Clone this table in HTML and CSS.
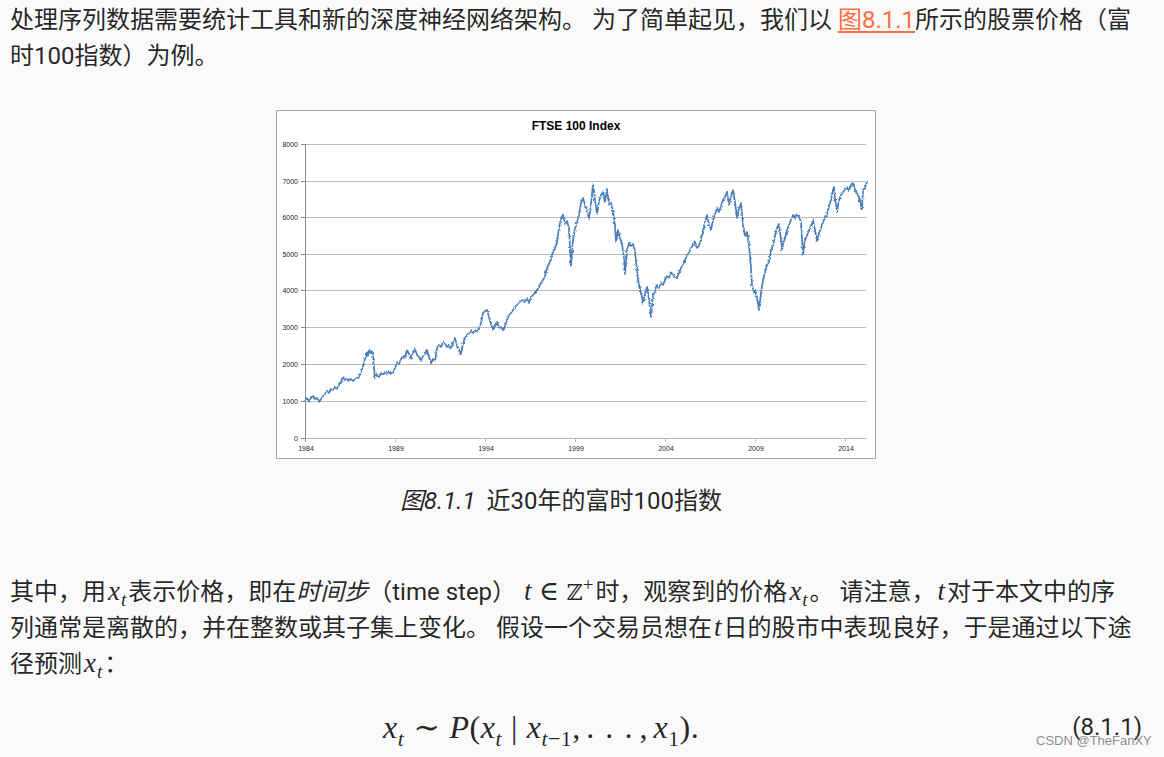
FILE: index.html
```html
<!DOCTYPE html>
<html lang="zh-CN">
<head>
<meta charset="utf-8">
<title>序列模型</title>
<link rel="stylesheet" href="styles.css">
</head>
<body>
<div class="page">
  <p class="para">处理序列数据需要统计工具和新的深度神经网络架构。 为了简单起见，我们以 <a class="ref" href="#fig-ftse100">图8.1.1</a>所示的股票价格（富时100指数）为例。</p>

  <figure class="figure" id="fig-ftse100">
    <div class="chart">
      <svg class="plot" viewBox="277 111 598 347" width="598" height="347" xmlns="http://www.w3.org/2000/svg">
        <defs>
          <filter id="rough" x="-2%" y="-5%" width="104%" height="110%">
            <feTurbulence type="fractalNoise" baseFrequency="0.45" numOctaves="2" seed="7" result="noise"/>
            <feDisplacementMap in="SourceGraphic" in2="noise" scale="3" xChannelSelector="R" yChannelSelector="G"/>
          </filter>
        </defs>
        <text class="title" x="576" y="130">FTSE 100 Index</text>
        <g class="grid">
          <line x1="305" y1="144.5" x2="866" y2="144.5"/>
          <line x1="305" y1="181.5" x2="866" y2="181.5"/>
          <line x1="305" y1="217.5" x2="866" y2="217.5"/>
          <line x1="305" y1="254.5" x2="866" y2="254.5"/>
          <line x1="305" y1="290.5" x2="866" y2="290.5"/>
          <line x1="305" y1="327.5" x2="866" y2="327.5"/>
          <line x1="305" y1="364.5" x2="866" y2="364.5"/>
          <line x1="305" y1="401.5" x2="866" y2="401.5"/>
        </g>
        <path class="axis" d="M305.5 144 V442 M301 144.5 H305 M301 181.5 H305 M301 217.5 H305 M301 254.5 H305 M301 290.5 H305 M301 327.5 H305 M301 364.5 H305 M301 401.5 H305 M301 438.5 H305"/>
        <path class="xaxis" d="M305 438.5 H866 M395.5 438 V442 M485.5 438 V442 M575.5 438 V442 M665.5 438 V442 M755.5 438 V442 M845.5 438 V442"/>
        <g class="ylab">
          <text x="298" y="147">8000</text>
          <text x="298" y="184">7000</text>
          <text x="298" y="220">6000</text>
          <text x="298" y="257">5000</text>
          <text x="298" y="293">4000</text>
          <text x="298" y="330">3000</text>
          <text x="298" y="367">2000</text>
          <text x="298" y="404">1000</text>
          <text x="298" y="441">0</text>
        </g>
        <g class="xlab">
          <text x="306" y="451">1984</text>
          <text x="396" y="451">1989</text>
          <text x="486" y="451">1994</text>
          <text x="576" y="451">1999</text>
          <text x="666" y="451">2004</text>
          <text x="756" y="451">2009</text>
          <text x="846" y="451">2014</text>
        </g>
        <polyline class="series" filter="url(#rough)" points="305,401 307,398 309,402 311,397 313,396 315,399 317,398 319,402 321,399 323,396 325,394 327,391 329,393 331,389 333,390 335,387 337,389 339,385 341,382 343,377 345,380 347,378 349,381 351,379 353,381 355,379 357,378 359,377 361,372 363,367 364,362 366,357 367,352 368,356 369,350 370,353 371,351 372,354 373,352 374,368 375,378 377,374 379,377 381,373 383,375 385,372 387,374 389,371 391,374 393,373 395,368 397,362 399,364 401,359 403,356 405,358 407,350 409,354 411,358 413,353 415,349 417,355 419,357 421,361 423,356 425,354 427,350 429,357 431,363 433,359 435,361 437,348 439,345 441,347 443,342 445,344 447,347 449,345 451,349 453,343 455,338 457,345 459,350 461,354 463,344 465,337 467,335 469,333 471,331 473,333 475,330 477,332 479,328 481,323 483,313 485,311 487,310 489,317 491,324 493,330 495,325 497,322 499,328 501,327 503,330 505,326 507,320 509,315 511,313 513,310 515,307 517,305 519,303 521,301 523,300 525,302 527,298 529,303 531,297 533,295 535,293 537,290 539,287 541,283 543,280 545,276 547,268 549,264 551,259 553,252 555,248 557,242 559,228 561,218 563,215 565,224 567,221 569,229 571,266 573,240 575,228 577,222 579,215 581,203 583,198 585,205 587,210 589,219 591,204 593,184 595,200 597,214 599,201 601,195 603,192 605,202 607,189 609,204 611,203 613,212 615,225 616,242 618,230 620,238 622,244 624,258 625,274 627,250 629,243 631,246 633,244 635,252 637,270 638,280 640,289 642,297 643,303 645,294 647,287 649,300 651,317 653,296 655,291 657,285 659,288 661,283 663,285 665,280 667,276 669,278 671,272 673,275 675,277 677,278 679,273 681,268 683,265 685,260 687,255 689,253 691,248 693,245 695,242 697,248 699,246 701,239 703,232 705,222 707,215 709,225 711,230 713,220 715,214 717,208 719,212 721,206 723,200 725,197 727,192 729,205 731,196 733,190 735,202 737,218 739,208 741,204 743,225 745,236 747,232 749,245 751,268 752,285 754,293 755,290 757,297 759,310 761,293 763,280 765,272 767,265 769,262 771,251 773,245 775,236 777,228 779,224 781,240 782,250 783,244 785,238 787,230 789,225 791,220 793,215 795,218 797,214 799,217 801,222 803,255 805,240 807,236 809,230 811,226 813,220 815,230 817,241 819,233 821,228 823,222 825,218 827,214 829,206 831,200 833,190 834,187 835,198 837,212 839,200 841,195 843,192 845,190 847,187 849,191 851,185 853,183 855,190 857,194 859,197 861,206 862,209 863,190 865,188 867,182"/>
      </svg>
    </div>
    <figcaption class="caption"><span class="cap-num">图8.1.1</span><span class="cap-text">近30年的富时100指数</span></figcaption>
  </figure>

  <p class="para para-2">其中，用<span class="m"><i>x</i><sub><i>t</i></sub></span>表示价格，即在<em class="term">时间步</em>（time step） <span class="m"><i>t</i><span class="rel">∈</span><span class="bb">ℤ</span><sup>+</sup></span>时，观察到的价格<span class="m"><i>x</i><sub><i>t</i></sub></span>。 请注意，<span class="m"><i>t</i></span>对于本文中的序<br>列通常是离散的，并在整数或其子集上变化。 假设一个交易员想在<span class="m"><i>t</i></span>日的股市中表现良好，于是通过以下途<br>径预测<span class="m"><i>x</i><sub><i>t</i></sub></span>：</p>

  <div class="equation">
    <div class="formula"><i>x</i><sub><i>t</i></sub><span class="rel">∼</span><i>P</i>(<i>x</i><sub><i>t</i></sub><span class="rel">|</span><i>x</i><sub><i>t</i>−1</sub><span class="comma">,</span><span class="dots">. . .</span><span class="comma">,</span><i>x</i><sub>1</sub>).</div>
    <span class="eqno">(8.1.1)</span>
  </div>
</div>
<div class="watermark">CSDN @TheFanXY</div>
</body>
</html>
```

FILE: styles.css
```css
html, body {
  margin: 0;
  padding: 0;
}

body {
  background: #fafafa;
  color: rgba(0, 0, 0, 0.87);
  font-family: Roboto, "Noto Sans CJK SC", sans-serif;
  font-size: 24px;
  line-height: 36px;
  position: relative;
  width: 1164px;
  height: 757px;
  overflow: hidden;
}

.page {
  padding: 2px 22px 0 10px;
}

.para {
  margin: 0;
}

.para-2 {
  margin-top: 55px;
}

.ref {
  color: #ff6e40;
  text-decoration: underline;
  text-decoration-thickness: 2px;
  text-underline-offset: 3px;
}

.figure {
  margin: 36px 0 0;
}

.chart {
  width: 598px;
  height: 347px;
  margin: 0 auto;
  border: 1px solid #a8a8a8;
  background: #ffffff;
}

.plot {
  display: block;
}

.title {
  font-family: "Liberation Sans", Arial, sans-serif;
  font-size: 12px;
  font-weight: bold;
  fill: #000;
  text-anchor: middle;
}

.grid line {
  stroke: #bcbcbc;
  stroke-width: 1;
}

.axis {
  fill: none;
  stroke: #8c8c8c;
  stroke-width: 1;
}

.xaxis {
  fill: none;
  stroke: #b8b8b8;
  stroke-width: 1;
}

.ylab text {
  font-family: "Liberation Sans", Arial, sans-serif;
  font-size: 7px;
  fill: #1a1a2a;
  text-anchor: end;
}

.xlab text {
  font-family: "Liberation Sans", Arial, sans-serif;
  font-size: 7px;
  fill: #1a1a2a;
  text-anchor: middle;
}

.series {
  fill: none;
  stroke: #4a7ebb;
  stroke-width: 1.7;
  stroke-linejoin: round;
}

.caption {
  margin: 24px 0 0;
  padding-right: 30px;
  text-align: center;
}

.cap-num {
  font-style: italic;
  margin-right: 11px;
}

.term {
  font-style: italic;
}

.m {
  font-family: "Liberation Serif", "DejaVu Serif", serif;
  font-size: 27px;
  line-height: 0;
  padding: 0 2px;
}

.m i {
  font-style: italic;
}

.m sub {
  margin-left: 1px;
}

sub, sup {
  font-size: 0.7em;
  line-height: 0;
}

sub {
  vertical-align: -0.3em;
}

sup {
  vertical-align: 0.5em;
}

.bb {
  font-family: "DejaVu Serif", serif;
  font-size: 22px;
}

.rel {
  margin: 0 0.28em;
  font-style: normal;
}

.equation {
  display: flex;
  align-items: center;
  margin-top: 22px;
  height: 46px;
}

.formula {
  flex: 1;
  text-align: center;
  font-family: "Liberation Serif", "DejaVu Serif", serif;
  font-size: 32px;
  line-height: 46px;
  letter-spacing: 0.5px;
}

.formula i {
  font-style: italic;
}

.formula sub {
  font-size: 0.68em;
  vertical-align: -0.35em;
}

.comma {
  margin-right: 0.17em;
}

.dots {
  margin-right: 0.17em;
  letter-spacing: 0.05em;
}

.eqno {
  font-size: 24px;
}

.watermark {
  position: absolute;
  left: 1036px;
  top: 733px;
  font-family: "Liberation Sans", Arial, sans-serif;
  font-size: 13px;
  line-height: 16px;
  color: rgba(120, 120, 120, 0.85);
}
```
